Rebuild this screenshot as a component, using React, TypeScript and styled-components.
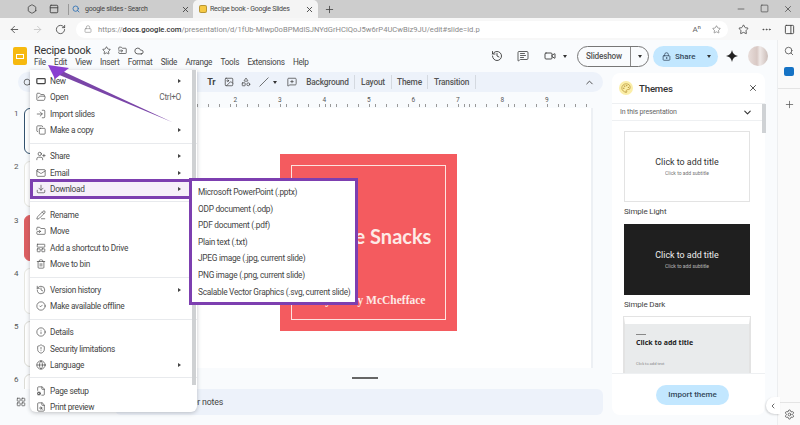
import { FC, ReactNode } from "react";
import styled, { createGlobalStyle } from "styled-components";
import {
  ArrowLeft, ArrowRight, RotateCw, Lock, Star, FolderInput, Cloud, Search, X, Plus, Minus, Copy,
  MoreHorizontal, PanelRight, PanelTop, Hexagon, History, MessageSquareText, Video, LockKeyhole, ImageIcon,
  Shapes, Slash, MessageSquarePlus, ChevronUp, ChevronDown, Settings, Palette, ChevronLeft,
  LayoutGrid, FolderOpen, LogIn, UserPlus, Mail, Download, PencilLine, FolderSymlink, Trash2,
  CircleCheck, Info, ShieldAlert, Globe, FileCog, FileSearch, RectangleHorizontal, LayoutPanelTop, Square,
} from "lucide-react";

const GlobalStyle = createGlobalStyle`
  html, body { margin: 0; padding: 0; background: #f9fbfd; }
  body { font-family: Roboto, "Liberation Sans", sans-serif; color: #3c4043; }
  * { box-sizing: border-box; }
`;

const PURPLE = "#7d3fb0";

const Page = styled.div`
  position: relative;
  width: 800px;
  height: 425px;
  overflow: hidden;
  display: flex;
  flex-direction: column;
`;

/* browser chrome */
const TabStrip = styled.div`
  height: 18px;
  background: #cdcdcd;
  display: flex;
  align-items: center;
  color: #444;
  padding-left: 21px;
`;
const StripIcon = styled.span`
  width: 22px;
  display: flex;
  justify-content: center;
`;
const StripDivider = styled.span`
  width: 1px;
  height: 11px;
  background: #999;
  margin: 0 0 0 3px;
`;
const Tab = styled.div<{ $active?: boolean }>`
  width: ${(p) => (p.$active ? "125px" : "118px")};
  height: 18px;
  margin-left: 3px;
  display: flex;
  align-items: center;
  gap: ${(p) => (p.$active ? "3px" : "5px")};
  padding: ${(p) => (p.$active ? "0 4px 0 6px" : "0 0 0 0")};
  font-size: 7px;
  letter-spacing: -0.25px;
  background: ${(p) => (p.$active ? "#f4f4f4" : "transparent")};
  border-radius: 5px 5px 0 0;
  color: #444;
`;
const TabTitle = styled.span`
  flex: 1;
  white-space: nowrap;
`;
const Favicon = styled.span<{ $color: string }>`
  width: 8px;
  height: 8px;
  border-radius: 2px;
  background: ${(p) => p.$color};
  border: 1px solid rgba(0, 0, 0, 0.25);
`;
const WindowControls = styled.div`
  margin-left: auto;
  display: flex;
  gap: 14px;
  padding-right: 7px;
`;
const AddressRow = styled.div`
  height: 22px;
  background: #f7f7f7;
  display: flex;
  align-items: center;
  color: #444;
  padding-left: 3px;
`;
const NavIcon = styled.span<{ $faded?: boolean }>`
  width: 23px;
  display: flex;
  justify-content: center;
  color: ${(p) => (p.$faded ? "#c4c4c4" : "#444")};
`;
const AddressPill = styled.div`
  width: 652px;
  height: 17px;
  margin-left: 4px;
  background: #fff;
  border-radius: 9px;
  display: flex;
  align-items: center;
  gap: 6px;
  padding: 0 7px 0 8px;
  font-size: 7.6px;
  color: #8a8a8a;
  white-space: nowrap;
`;
const Domain = styled.b`
  color: #333;
  font-weight: 500;
`;
const PillEnd = styled.span`
  margin-left: auto;
  display: flex;
  gap: 11px;
  color: #666;
  font-size: 8px;
`;
const ChromeEnd = styled.div`
  margin-left: 10px;
  display: flex;
  gap: 12px;
  color: #444;
`;

/* docs app */
const Workspace = styled.div`
  flex: 1;
  display: flex;
  min-height: 0;
`;
const AppArea = styled.div`
  width: 777px;
  display: flex;
  flex-direction: column;
  padding-bottom: 10px;
`;
const Header = styled.div`
  height: 32px;
  display: flex;
  align-items: center;
  padding: 0 9px 0 13px;
`;
const DocLogo = styled.div`
  width: 14px;
  height: 18px;
  background: #f6b90f;
  border-radius: 2px;
  display: flex;
  align-items: center;
  justify-content: center;
  margin-right: 7px;
`;
const LogoSlot = styled.span`
  width: 8px;
  height: 5px;
  border: 1px solid #fff;
`;
const TitleBlock = styled.div`
  display: flex;
  flex-direction: column;
  align-self: flex-start;
  margin-top: 1px;
`;
const TitleRow = styled.div`
  display: flex;
  align-items: center;
  gap: 7px;
  height: 15px;
  font-size: 10.8px;
  letter-spacing: -0.2px;
  color: #333;
  margin-top: 2px;
`;
const DocName = styled.span`
  margin-right: 2px;
  width: 59px;
  white-space: nowrap;
`;
const MenuBar = styled.div`
  display: flex;
  gap: 8.3px;
  font-size: 8.2px;
  letter-spacing: -0.27px;
  color: #444;
  height: 12px;
  line-height: 12px;
  margin-top: -2px;
`;
const HeaderActions = styled.div`
  margin-left: auto;
  display: flex;
  align-items: center;
  color: #444;
`;
const ActionIcon = styled.span<{ $w: number }>`
  width: ${(p) => p.$w}px;
  display: flex;
  justify-content: center;
  align-items: center;
`;
const Caret = styled.span<{ $color?: string }>`
  width: 0;
  height: 0;
  border-left: 2.5px solid transparent;
  border-right: 2.5px solid transparent;
  border-top: 3px solid ${(p) => p.$color ?? "#333"};
`;
const SlideshowPill = styled.div`
  width: 72px;
  height: 21px;
  margin-left: 10px;
  border: 1px solid #777;
  border-radius: 11px;
  display: flex;
  align-items: center;
  font-size: 8.2px;
  letter-spacing: -0.2px;
  font-weight: 500;
  color: #555;
`;
const SlideshowLabel = styled.span`
  width: 53px;
  text-align: center;
  border-right: 1px solid #888;
  line-height: 19px;
`;
const CaretSlot = styled.span`
  flex: 1;
  display: flex;
  justify-content: center;
`;
const SharePill = styled.div`
  width: 65px;
  height: 21px;
  margin-left: 4px;
  background: #c2e7ff;
  border-radius: 11px;
  display: flex;
  align-items: center;
  gap: 4px;
  padding: 0 7px 0 9px;
  font-size: 8px;
  font-weight: 500;
  color: #33475b;
`;
const ShareCaret = styled.span`
  margin-left: auto;
  display: flex;
`;
const Sparkle = styled.svg`
  margin: 0 10px 0 8px;
`;
const Avatar = styled.div`
  width: 20px;
  height: 20px;
  border-radius: 50%;
  background: linear-gradient(90deg, #e9dedb 0%, #d8c8c4 45%, #efe8e6 60%, #cbbdb9 100%);
`;

const EditorBody = styled.div`
  flex: 1;
  display: flex;
  min-height: 0;
  gap: 7px;
`;
const LeftColumn = styled.div`
  width: 605px;
  display: flex;
  flex-direction: column;
`;
const Toolbar = styled.div`
  height: 20px;
  margin-left: 18px;
  width: 585px;
  background: #edf2fa;
  border-radius: 10px;
  display: flex;
  align-items: center;
  padding-left: 5px;
  color: #444;
  font-size: 8.3px;
  letter-spacing: -0.2px;
`;
const ToolIcons = styled.div`
  margin-left: 170.5px;
  display: flex;
  align-items: center;
`;
const ToolSlot = styled.span<{ $w: number; $gap?: number }>`
  width: ${(p) => p.$w}px;
  margin-left: ${(p) => p.$gap ?? 0}px;
  display: flex;
  justify-content: center;
  align-items: center;
  font-size: 9px;
  font-weight: 700;
`;
const ToolLabel = styled.span<{ $w: number }>`
  width: ${(p) => p.$w}px;
  text-align: center;
  border-right: 1px solid #d4d9e0;
  line-height: 14px;
  font-weight: 500;
  color: #555;
  &:last-of-type {
    border-right: none;
  }
`;
const ToolEnd = styled.span`
  margin-left: auto;
  margin-right: 8px;
  display: flex;
`;
const MiddleRow = styled.div`
  flex: 1;
  min-height: 0;
  display: flex;
  padding-top: 5px;
`;
const Filmstrip = styled.div`
  width: 146px;
  padding: 11px 0 0 14px;
  overflow: hidden;
`;
const FilmItem = styled.div`
  height: 53.3px;
  display: flex;
  align-items: flex-start;
  font-size: 8px;
  color: #555;
`;
const FilmNumber = styled.span`
  width: 10px;
  margin-top: 1px;
`;
const Thumb = styled.div<{ $bg: string; $border: string; $w: number }>`
  width: 110px;
  height: 46px;
  border-radius: 6px;
  background: ${(p) => p.$bg};
  border: ${(p) => p.$w}px solid ${(p) => p.$border};
`;
const EditorColumn = styled.div`
  width: 447px;
  display: flex;
  flex-direction: column;
`;
const Ruler = styled.div`
  height: 11px;
  display: flex;
  padding-left: 67px;
  background: repeating-linear-gradient(90deg, #999 0 0.6px, transparent 0.6px 5.56px) left 1px bottom 1px / 100% 3px no-repeat;
  font-size: 6.5px;
  line-height: 7px;
  color: #555;
`;
const RulerCell = styled.span`
  width: 44.5px;
  flex: none;
  text-align: center;
`;
const Canvas = styled.div`
  height: 260px;
  background: #fff;
  border-right: 2px solid #edf0f4;
  display: flex;
  justify-content: center;
  padding-top: 46px;
`;
const SlideCard = styled.div`
  width: 177px;
  height: 177px;
  flex: none;
  background: #f45b5f;
  padding: 11px;
`;
const SlideFrame = styled.div`
  height: 100%;
  border: 1.5px solid #fde3df;
  display: flex;
  flex-direction: column;
  align-items: center;
  padding-top: 58px;
  color: #fdeae6;
`;
const SlideTitle = styled.div`
  font-family: Lato, sans-serif;
  font-size: 20px;
  line-height: 24px;
  font-weight: 700;
  white-space: nowrap;
`;
const SlideBy = styled.div`
  font-family: "Liberation Serif", serif;
  font-size: 11.5px;
  line-height: 16px;
  font-weight: 700;
  margin: 44px 0 0 6px;
  white-space: nowrap;
`;
const Handle = styled.div`
  width: 26px;
  height: 1.5px;
  background: #666;
  margin: 9px 0 0 206px;
`;
const FooterRow = styled.div`
  height: 26px;
  display: flex;
  align-items: center;
`;
const GridButton = styled.span`
  width: 115px;
  padding-left: 16px;
  display: flex;
  color: #555;
`;
const NotesBar = styled.div`
  width: 488px;
  height: 26px;
  background: #edf2fa;
  border-radius: 6px;
  padding-left: 10px;
  display: flex;
  align-items: center;
  font-size: 8.8px;
  letter-spacing: -0.2px;
  color: #444;
`;

/* themes */
const ThemesPanel = styled.aside`
  position: relative;
  width: 153px;
  margin-top: 1px;
  background: #fff;
  border-radius: 8px;
  display: flex;
  flex-direction: column;
`;
const PanelHead = styled.div`
  height: 30px;
  display: flex;
  align-items: center;
  padding: 0 7px;
  font-size: 9.6px;
  letter-spacing: -0.15px;
  font-weight: 500;
  color: #333;
  gap: 6px;
`;
const PaletteBadge = styled.span`
  width: 14px;
  height: 14px;
  border-radius: 50%;
  background: #fbeea8;
  color: #b8963a;
  display: flex;
  align-items: center;
  justify-content: center;
`;
const PanelClose = styled.span`
  margin-left: auto;
  display: flex;
  color: #444;
`;
const SectionRow = styled.div`
  height: 18px;
  border-top: 1px solid #eef0f2;
  border-bottom: 1px solid #eef0f2;
  display: flex;
  align-items: center;
  padding: 0 12px 0 8px;
  font-size: 7px;
  letter-spacing: -0.15px;
  color: #666;
  justify-content: space-between;
`;
const ThemeList = styled.div`
  height: 252px;
  overflow: hidden;
  padding: 10px 0 0 12px;
`;
const ThemeCard = styled.div<{ $dark?: boolean }>`
  width: 126px;
  height: 71px;
  background: ${(p) => (p.$dark ? "#1f1f1f" : "#fff")};
  color: ${(p) => (p.$dark ? "#eee" : "#333")};
  border: 1px solid ${(p) => (p.$dark ? "#1f1f1f" : "#e3e3e3")};
  display: flex;
  flex-direction: column;
  align-items: center;
  justify-content: center;
  font-size: 8.9px;
`;
const CardSub = styled.span`
  font-size: 5px;
  margin-top: 3px;
  opacity: 0.7;
`;
const ThemeName = styled.div`
  font-size: 8px;
  letter-spacing: -0.15px;
  color: #444;
  height: 22px;
  line-height: 20px;
`;
const StyledCard = styled.div`
  width: 126px;
  height: 71px;
  border: 1px solid #e3e3e3;
  border-top-width: 7px;
  border-top-color: #fff;
  outline: 1px solid #e3e3e3;
  background: #e9ebec;
  padding: 10px 11px;
  font-family: "Open Sans", sans-serif;
  font-size: 7px;
  font-weight: 700;
  color: #222;
  display: flex;
  flex-direction: column;
`;
const CardRule = styled.span`
  width: 10px;
  height: 1px;
  background: #888;
  margin-bottom: 3px;
`;
const CardFoot = styled.span`
  font-size: 3.8px;
  font-weight: 400;
  color: #777;
  margin-top: 14px;
`;
const Scrollbar = styled.span`
  position: absolute;
  right: -1px;
  top: 31px;
  width: 4px;
  height: 29px;
  background: #cfd2d5;
`;
const PanelFooter = styled.div`
  flex: 1;
  border-top: 1px solid #eef0f2;
  display: flex;
  justify-content: center;
  align-items: center;
  padding-left: 8px;
`;
const ImportButton = styled.div`
  width: 73px;
  height: 20px;
  background: #c2e7ff;
  border-radius: 10px;
  font-size: 8px;
  font-weight: 500;
  color: #33475b;
  display: flex;
  align-items: center;
  justify-content: center;
`;

const SideRail = styled.div`
  position: relative;
  width: 23px;
  background: #fafafa;
  border-left: 1px solid #eceef0;
  display: flex;
  flex-direction: column;
  align-items: center;
  color: #555;
`;
const RailSlot = styled.span`
  height: 21px;
  display: flex;
  align-items: center;
`;
const OutlookMark = styled.span`
  width: 10px;
  height: 9px;
  border-radius: 2px;
  background: #1673c5;
`;
const RailRule = styled.span`
  width: 100%;
  height: 1px;
  background: #e4e4e4;
  margin: 6px 0 5px;
`;
const RailBottom = styled.div`
  margin-top: auto;
  width: 100%;
  border-top: 1px solid #e4e4e4;
  height: 23px;
  display: flex;
  align-items: center;
  justify-content: center;
`;
const CollapseButton = styled.span`
  position: absolute;
  left: -12px;
  bottom: 11px;
  width: 14px;
  height: 17px;
  border-radius: 9px 0 0 9px;
  background: #fff;
  box-shadow: -1px 1px 2px rgba(0, 0, 0, 0.15);
  display: flex;
  align-items: center;
  justify-content: center;
  color: #444;
`;

/* file menu, over the editor */
const FileMenu = styled.div`
  position: absolute;
  left: 30px;
  top: 70px;
  width: 167px;
  height: 342px;
  background: #fff;
  border-radius: 0 0 6px 6px;
  box-shadow: 0 1px 4px rgba(60, 64, 67, 0.3);
  padding-top: 2.4px;
  overflow: hidden;
`;
const MenuScroll = styled.span`
  position: absolute;
  right: 1px;
  top: 0;
  width: 4px;
  height: 315px;
  background: #cfd1d3;
`;
const MenuRow = styled.div<{ $active?: boolean }>`
  position: relative;
  width: 162px;
  height: 16.6px;
  display: flex;
  align-items: center;
  padding: 0 11px 0 6px;
  font-size: 8.3px;
  letter-spacing: -0.28px;
  color: #444;
  white-space: nowrap;
  background: ${(p) => (p.$active ? "#f6eff9" : "transparent")};
  ${(p) =>
    p.$active &&
    `&::after {
      content: "";
      position: absolute;
      inset: -2px 0;
      border: 3px solid ${PURPLE};
    }`}
`;
const MenuIcon = styled.span`
  width: 14px;
  display: flex;
  color: #444;
`;
const MenuHint = styled.span`
  margin-left: auto;
  color: #666;
`;
const MenuArrow = styled.span`
  margin-left: auto;
  width: 0;
  height: 0;
  border-top: 2px solid transparent;
  border-bottom: 2px solid transparent;
  border-left: 3px solid #444;
`;
const MenuRule = styled.div`
  height: 8.9px;
  display: flex;
  align-items: center;
  &::before {
    content: "";
    flex: 1;
    height: 1px;
    background: #e8eaed;
  }
`;
const SubMenu = styled.div`
  position: absolute;
  left: 189px;
  top: 178px;
  width: 169px;
  height: 127px;
  background: #fff;
  border: 3px solid ${PURPLE};
  padding-top: 3px;
`;
const SubRow = styled.div`
  height: 16.6px;
  line-height: 16.6px;
  padding-left: 6px;
  font-size: 8.3px;
  letter-spacing: -0.26px;
  color: #444;
  white-space: nowrap;
`;
const Pointer = styled.svg`
  position: absolute;
  left: 0;
  top: 0;
  pointer-events: none;
`;

const S = 10;
const sw = 1.6;

type Item = { label: string; icon?: ReactNode; hint?: string; arrow?: boolean; active?: boolean };
const menuGroups: Item[][] = [
  [
    { label: "New", icon: <RectangleHorizontal size={S} strokeWidth={3} />, arrow: true },
    { label: "Open", icon: <FolderOpen size={S} strokeWidth={sw} />, hint: "Ctrl+O" },
    { label: "Import slides", icon: <LogIn size={S} strokeWidth={sw} /> },
    { label: "Make a copy", icon: <Copy size={S} strokeWidth={sw} />, arrow: true },
  ],
  [
    { label: "Share", icon: <UserPlus size={S} strokeWidth={sw} />, arrow: true },
    { label: "Email", icon: <Mail size={S} strokeWidth={sw} />, arrow: true },
    { label: "Download", icon: <Download size={S} strokeWidth={sw} />, arrow: true, active: true },
  ],
  [
    { label: "Rename", icon: <PencilLine size={S} strokeWidth={sw} /> },
    { label: "Move", icon: <FolderSymlink size={S} strokeWidth={sw} /> },
    { label: "Add a shortcut to Drive", icon: <LayoutPanelTop size={S} strokeWidth={sw} /> },
    { label: "Move to bin", icon: <Trash2 size={S} strokeWidth={sw} /> },
  ],
  [
    { label: "Version history", icon: <History size={S} strokeWidth={sw} />, arrow: true },
    { label: "Make available offline", icon: <CircleCheck size={S} strokeWidth={sw} /> },
  ],
  [
    { label: "Details", icon: <Info size={S} strokeWidth={sw} /> },
    { label: "Security limitations", icon: <ShieldAlert size={S} strokeWidth={sw} /> },
    { label: "Language", icon: <Globe size={S} strokeWidth={sw} />, arrow: true },
  ],
  [
    { label: "Page setup", icon: <FileCog size={S} strokeWidth={sw} /> },
    { label: "Print preview", icon: <FileSearch size={S} strokeWidth={sw} /> },
  ],
];

const downloadOptions = [
  "Microsoft PowerPoint (.pptx)",
  "ODP document (.odp)",
  "PDF document (.pdf)",
  "Plain text (.txt)",
  "JPEG image (.jpg, current slide)",
  "PNG image (.png, current slide)",
  "Scalable Vector Graphics (.svg, current slide)",
];

const thumbs = [
  { bg: "#fff", border: "#33526e", w: 1.5 },
  { bg: "#fff", border: "#e6e6e0", w: 1 },
  { bg: "#dd5f62", border: "#dd5f62", w: 1 },
  { bg: "#fff", border: "#e6e6e0", w: 1 },
  { bg: "#fff", border: "#dcdcd6", w: 1 },
  { bg: "#fff", border: "#dcdcd6", w: 1 },
];

const FileMenuPanel: FC = () => (
  <FileMenu>
    {menuGroups.map((group, i) => (
      <div key={i}>
        {i > 0 && <MenuRule />}
        {group.map((item) => (
          <MenuRow key={item.label} $active={item.active}>
            <MenuIcon>{item.icon}</MenuIcon>
            {item.label}
            {item.hint && <MenuHint>{item.hint}</MenuHint>}
            {item.arrow && <MenuArrow />}
          </MenuRow>
        ))}
      </div>
    ))}
    <MenuScroll />
  </FileMenu>
);

export default function App() {
  return (
    <Page>
      <GlobalStyle />
      <TabStrip>
        <StripIcon><Hexagon size={10} strokeWidth={2} /></StripIcon>
        <StripIcon><PanelTop size={10} strokeWidth={2.2} /></StripIcon>
        <StripDivider />
        <Tab>
          <Search size={8} color="#2a6fb5" strokeWidth={2.5} />
          <TabTitle>google slides - Search</TabTitle>
          <X size={9} strokeWidth={2.4} />
        </Tab>
        <Tab $active>
          <Favicon $color="#f6c944" />
          <TabTitle>Recipe book - Google Slides</TabTitle>
          <X size={9} strokeWidth={2.4} />
        </Tab>
        <StripIcon><Plus size={11} strokeWidth={1.8} /></StripIcon>
        <WindowControls>
          <Minus size={10} strokeWidth={1.6} />
          <Square size={9} strokeWidth={1.8} />
          <X size={10} strokeWidth={1.8} />
        </WindowControls>
      </TabStrip>
      <AddressRow>
        <NavIcon><ArrowLeft size={11} strokeWidth={1.8} /></NavIcon>
        <NavIcon $faded><ArrowRight size={11} strokeWidth={1.8} /></NavIcon>
        <NavIcon><RotateCw size={11} strokeWidth={1.8} /></NavIcon>
        <AddressPill>
          <Lock size={8} strokeWidth={1.8} />
          <span>
            https://<Domain>docs.google.com</Domain>/presentation/d/1fUb-MIwp0oBPMdlSJNYdGrHClQoJ5w6rP4UCwBiz9JU/edit#slide=id.p
          </span>
          <PillEnd>
            <span>A&#8319;</span>
            <Star size={9} strokeWidth={1.6} />
          </PillEnd>
        </AddressPill>
        <ChromeEnd>
          <Star size={11} strokeWidth={1.8} />
          <MoreHorizontal size={11} strokeWidth={1.8} />
          <PanelRight size={11} strokeWidth={2} />
        </ChromeEnd>
      </AddressRow>
      <Workspace>
        <AppArea>
          <Header>
            <DocLogo><LogoSlot /></DocLogo>
            <TitleBlock>
              <TitleRow>
                <DocName>Recipe book</DocName>
                <Star size={9} strokeWidth={1.8} />
                <FolderInput size={9} strokeWidth={1.8} />
                <Cloud size={10} strokeWidth={1.8} />
              </TitleRow>
              <MenuBar>
                {["File", "Edit", "View", "Insert", "Format", "Slide", "Arrange", "Tools", "Extensions", "Help"].map((m) => (
                  <span key={m}>{m}</span>
                ))}
              </MenuBar>
            </TitleBlock>
            <HeaderActions>
              <ActionIcon $w={26}><History size={12} strokeWidth={1.9} /></ActionIcon>
              <ActionIcon $w={26}><MessageSquareText size={12} strokeWidth={1.7} /></ActionIcon>
              <ActionIcon $w={27}><Video size={12} strokeWidth={1.9} /></ActionIcon>
              <Caret />
              <SlideshowPill>
                <SlideshowLabel>Slideshow</SlideshowLabel>
                <CaretSlot><Caret /></CaretSlot>
              </SlideshowPill>
              <SharePill>
                <LockKeyhole size={9} strokeWidth={2} />
                Share
                <ShareCaret><Caret /></ShareCaret>
              </SharePill>
              <Sparkle width="12" height="12" viewBox="0 0 12 12">
                <path d="M6 0 C6.6 3.6 8.4 5.4 12 6 C8.4 6.6 6.6 8.4 6 12 C5.4 8.4 3.6 6.6 0 6 C3.6 5.4 5.4 3.6 6 0Z" fill="#222" />
              </Sparkle>
              <Avatar />
            </HeaderActions>
          </Header>
          <EditorBody>
            <LeftColumn>
              <Toolbar>
                <Search size={9} strokeWidth={2} />
                <ToolIcons>
                  <ToolSlot $w={17.5}>Tr</ToolSlot>
                  <ToolSlot $w={17.5}><ImageIcon size={10} strokeWidth={1.8} /></ToolSlot>
                  <ToolSlot $w={17.5}><Shapes size={10} strokeWidth={1.8} /></ToolSlot>
                  <ToolSlot $w={17.5}><Slash size={10} strokeWidth={1.8} /></ToolSlot>
                  <ToolSlot $w={5}><Caret /></ToolSlot>
                  <ToolSlot $w={17.5} $gap={6}><MessageSquarePlus size={10} strokeWidth={1.8} /></ToolSlot>
                </ToolIcons>
                <ToolLabel $w={54}>Background</ToolLabel>
                <ToolLabel $w={37}>Layout</ToolLabel>
                <ToolLabel $w={36}>Theme</ToolLabel>
                <ToolLabel $w={48}>Transition</ToolLabel>
                <ToolEnd><ChevronUp size={11} strokeWidth={2} /></ToolEnd>
              </Toolbar>
              <MiddleRow>
                <Filmstrip>
                  {thumbs.map((t, i) => (
                    <FilmItem key={i}>
                      <FilmNumber>{i + 1}</FilmNumber>
                      <Thumb $bg={t.bg} $border={t.border} $w={t.w} />
                    </FilmItem>
                  ))}
                </Filmstrip>
                <EditorColumn>
                  <Ruler>
                    {[2, 3, 4, 5, 6, 7, 8, 9].map((n) => (
                      <RulerCell key={n}>{n}</RulerCell>
                    ))}
                  </Ruler>
                  <Canvas>
                    <SlideCard>
                      <SlideFrame>
                        <SlideTitle>Recipe Snacks</SlideTitle>
                        <SlideBy>By Chefy McChefface</SlideBy>
                      </SlideFrame>
                    </SlideCard>
                  </Canvas>
                  <Handle />
                </EditorColumn>
              </MiddleRow>
              <FooterRow>
                <GridButton><LayoutGrid size={10} strokeWidth={1.8} /></GridButton>
                <NotesBar>Click to add speaker notes</NotesBar>
              </FooterRow>
            </LeftColumn>
            <ThemesPanel>
              <PanelHead>
                <PaletteBadge><Palette size={10} strokeWidth={1.8} /></PaletteBadge>
                Themes
                <PanelClose><X size={10} strokeWidth={2.2} /></PanelClose>
              </PanelHead>
              <SectionRow>
                In this presentation
                <ChevronDown size={11} strokeWidth={2.4} color="#333" />
              </SectionRow>
              <ThemeList>
                <ThemeCard>
                  Click to add title
                  <CardSub>Click to add subtitle</CardSub>
                </ThemeCard>
                <ThemeName>Simple Light</ThemeName>
                <ThemeCard $dark>
                  Click to add title
                  <CardSub>Click to add subtitle</CardSub>
                </ThemeCard>
                <ThemeName>Simple Dark</ThemeName>
                <StyledCard>
                  <CardRule />
                  Click to add title
                  <CardFoot>Click to add text</CardFoot>
                </StyledCard>
              </ThemeList>
              <PanelFooter>
                <ImportButton>Import theme</ImportButton>
              </PanelFooter>
              <Scrollbar />
            </ThemesPanel>
          </EditorBody>
        </AppArea>
        <SideRail>
          <RailSlot><Search size={10} strokeWidth={2} /></RailSlot>
          <RailSlot><OutlookMark /></RailSlot>
          <RailRule />
          <RailSlot><Plus size={11} strokeWidth={1.6} /></RailSlot>
          <RailBottom><Settings size={11} strokeWidth={1.8} /></RailBottom>
          <CollapseButton><ChevronLeft size={8} strokeWidth={2.4} /></CollapseButton>
        </SideRail>
      </Workspace>
      <FileMenuPanel />
      <SubMenu>
        {downloadOptions.map((o) => (
          <SubRow key={o}>{o}</SubRow>
        ))}
      </SubMenu>
      <Pointer width="800" height="425" viewBox="0 0 800 425">
        <polygon points="173,122.5 60,70 57,74" fill="#7a45a8" />
        <polygon points="48,65 69,68 55,79" fill="#8a3fd0" />
      </Pointer>
    </Page>
  );
}
